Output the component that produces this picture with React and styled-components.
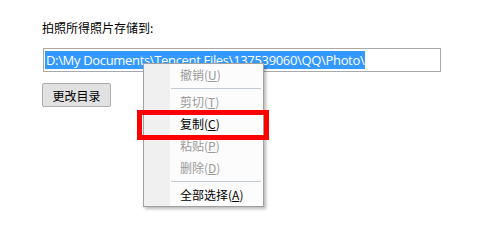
import React from "react";
import styled, { createGlobalStyle } from "styled-components";

const Global = createGlobalStyle`
  html, body { margin: 0; padding: 0; background: #ffffff; }
  body { font-family: "Noto Sans CJK SC", "Noto Sans", sans-serif; }
`;

const Page = styled.div`
  position: relative;
  width: 477px;
  height: 234px;
  box-sizing: border-box;
  padding: 20px 0 0 42px;
  background: #fff;
  overflow: hidden;
`;

const Label = styled.div`
  font-size: 12px;
  line-height: 16px;
  height: 16px;
  color: #000;
`;

const PathBox = styled.div`
  margin: 12px 0 0 1px;
  width: 398px;
  height: 24px;
  box-sizing: border-box;
  border: 1px solid #a9a9a9;
  background: #fff;
  display: flex;
  align-items: center;
  padding-left: 1px;
`;

const Selected = styled.span`
  display: inline-block;
  background: #3399ff;
  color: #fff;
  font-family: "Open Sans", "Noto Sans", sans-serif;
  font-size: 13px;
  letter-spacing: -0.33px;
  line-height: 18px;
  height: 18px;
  padding: 0 1px;
  white-space: pre;
`;

const Button = styled.button`
  margin-top: 11px;
  width: 69px;
  height: 24px;
  box-sizing: border-box;
  border: 1px solid #adadad;
  border-radius: 2px;
  background: #e1e1e1;
  font-family: "Noto Sans CJK SC", sans-serif;
  font-size: 12px;
  color: #000;
  padding: 0;
  display: flex;
  align-items: center;
  justify-content: center;
`;

const Menu = styled.div`
  position: absolute;
  left: 143px;
  top: 63px;
  width: 121px;
  box-sizing: border-box;
  border: 1px solid #a0a0a0;
  background: linear-gradient(to right, #f0f0f0 0, #f0f0f0 26px, #fcfcfc 26px);
  box-shadow: 2px 2px 3px rgba(0, 0, 0, 0.28);
  padding: 0;
`;

const Item = styled.div`
  height: 22px;
  line-height: 22px;
  padding-left: 36px;
  font-size: 12px;
  color: ${(p) => (p.$disabled ? "#9a9a9a" : "#000")};
  white-space: nowrap;
  u { text-decoration: underline; text-underline-offset: 1px; }
`;

const Separator = styled.div`
  height: 5px;
  display: flex;
  align-items: center;
  padding: 0 2px 0 27px;
  &::before {
    content: "";
    flex: 1;
    height: 1px;
    background: #c4cad1;
  }
`;

const Highlight = styled.div`
  position: absolute;
  left: 137px;
  top: 110px;
  width: 132px;
  height: 30px;
  box-sizing: border-box;
  border: 5px solid #ff0000;
  pointer-events: none;
`;

const items = [
  { label: "撤销", key: "U", disabled: true },
  "sep",
  { label: "剪切", key: "T", disabled: true },
  { label: "复制", key: "C", disabled: false },
  { label: "粘贴", key: "P", disabled: true },
  { label: "删除", key: "D", disabled: true },
  "sep",
  { label: "全部选择", key: "A", disabled: false },
];

export default function App() {
  return (
    <Page>
      <Global />
      <Label>拍照所得照片存储到:</Label>
      <PathBox>
        <Selected>{"D:\\My Documents\\Tencent Files\\137539060\\QQ\\Photo\\"}</Selected>
      </PathBox>
      <Button>更改目录</Button>
      <Menu>
        {items.map((it, i) =>
          it === "sep" ? (
            <Separator key={i} />
          ) : (
            <Item key={i} $disabled={it.disabled}>
              {it.label}(<u>{it.key}</u>)
            </Item>
          )
        )}
      </Menu>
      <Highlight />
    </Page>
  );
}
